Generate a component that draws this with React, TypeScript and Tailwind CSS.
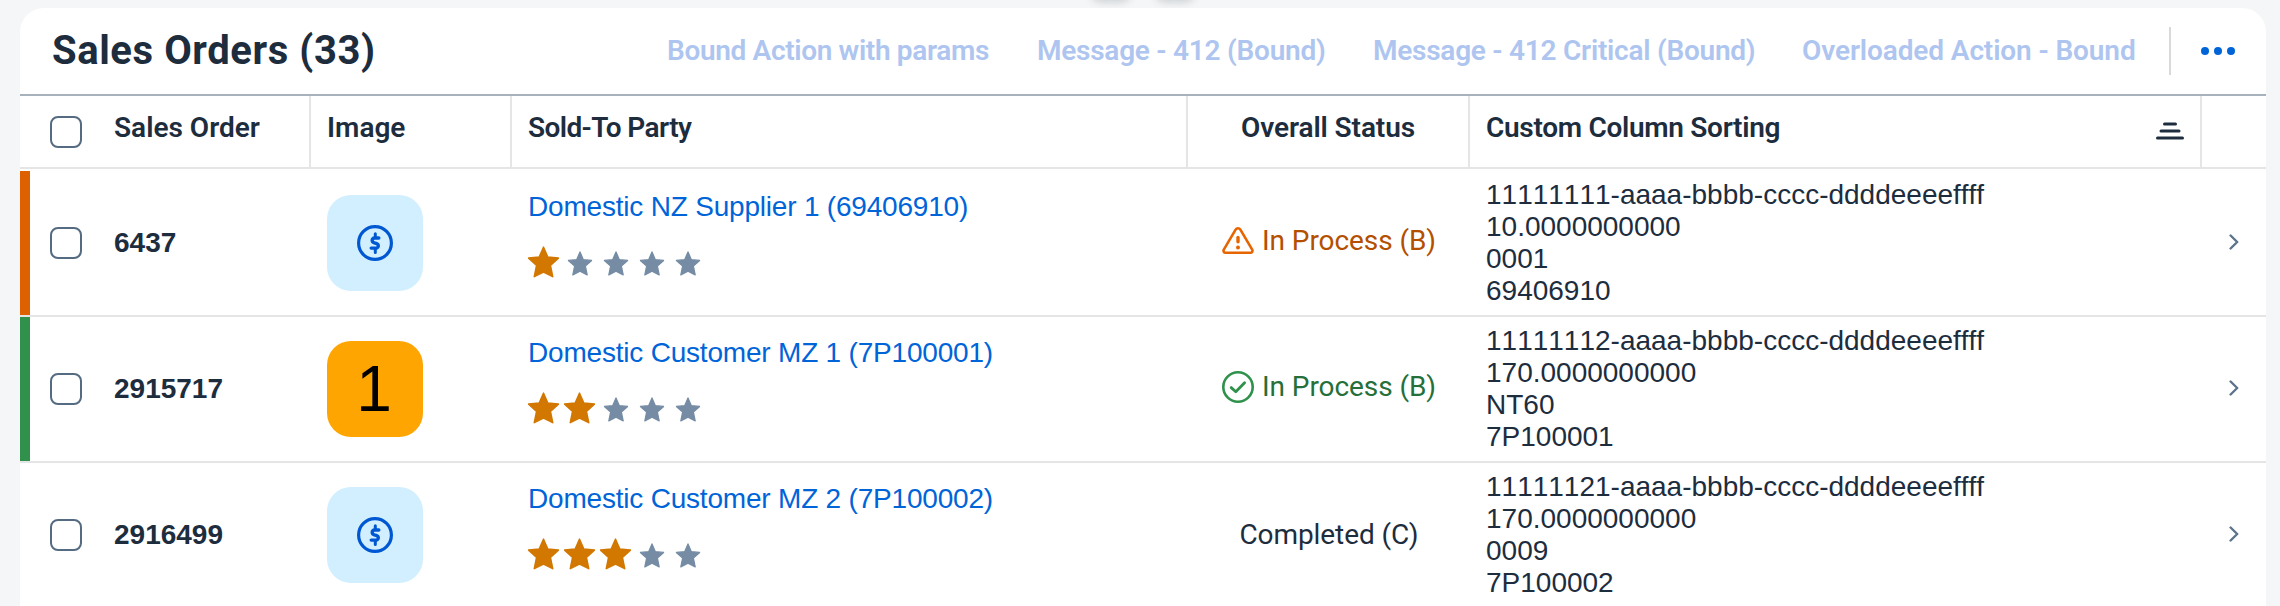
import type { ReactNode } from "react";

const COLS = "grid grid-cols-[10px_68px_213px_201px_676px_282px_732px_64px]";

type Status = "warning" | "success" | "none";

interface Order {
  id: string;
  status: Status;
  statusText: string;
  image?: string;
  party: string;
  rating: number;
  custom: string[];
}

const orders: Order[] = [
  {
    id: "6437",
    status: "warning",
    statusText: "In Process (B)",
    party: "Domestic NZ Supplier 1 (69406910)",
    rating: 1,
    custom: ["11111111-aaaa-bbbb-cccc-ddddeeeeffff", "10.0000000000", "0001", "69406910"],
  },
  {
    id: "2915717",
    status: "success",
    statusText: "In Process (B)",
    image: "1",
    party: "Domestic Customer MZ 1 (7P100001)",
    rating: 2,
    custom: ["11111112-aaaa-bbbb-cccc-ddddeeeeffff", "170.0000000000", "NT60", "7P100001"],
  },
  {
    id: "2916499",
    status: "none",
    statusText: "Completed (C)",
    party: "Domestic Customer MZ 2 (7P100002)",
    rating: 3,
    custom: ["11111121-aaaa-bbbb-cccc-ddddeeeeffff", "170.0000000000", "0009", "7P100002"],
  },
];

const highlight: Record<Status, string> = {
  warning: "bg-[#dd6100]",
  success: "bg-[#30914c]",
  none: "",
};

const statusColor: Record<Status, string> = {
  warning: "pb-1 text-[#b44f00]",
  success: "pb-1 text-[#256f3a]",
  none: "text-[#1d2d3e]",
};

function Checkbox() {
  return <span className="block size-8 rounded-lg border-2 border-[#556b82] bg-white" />;
}

function DollarIcon() {
  return (
    <svg viewBox="0 0 36 36" className="size-9" fill="none" stroke="#0057d2" strokeLinecap="round" strokeLinejoin="round">
      <circle cx="18" cy="18" r="16.4" strokeWidth="3.2" />
      <path d="M21.800 13h-4.300a2.300 2.300 0 0 0-2.300 2.400c0 1.500 1 2 2.200 2.400l1.700.5c1.200.4 2.200 1 2.200 2.400a2.300 2.300 0 0 1-2.300 2.400h-4.800" strokeWidth="3.4" />
      <path d="M18.300 8.800v3.400M18.300 24v3.500" strokeWidth="3" />
    </svg>
  );
}

function WarningIcon() {
  return (
    <svg viewBox="0 0 32 32" className="size-8" fill="none" stroke="#e76500" strokeLinecap="round" strokeLinejoin="round">
      <path d="M13.6 4.6a2.8 2.8 0 0 1 4.8 0l11.8 20.1a2.05 2.05 0 0 1-1.8 3.1H3.6a2.05 2.05 0 0 1-1.8-3.1z" strokeWidth="2.6" />
      <path d="M16 12.4v4.4" strokeWidth="3.4" />
      <circle cx="16" cy="22.4" r="2" fill="#e76500" stroke="none" />
    </svg>
  );
}

function SuccessIcon() {
  return (
    <svg viewBox="0 0 32 32" className="size-8" fill="none" stroke="#30914c" strokeLinecap="round" strokeLinejoin="round">
      <circle cx="16" cy="16" r="14.7" strokeWidth="2.6" />
      <path d="M9.2 16.6l4.6 4.2 8.8-9" strokeWidth="2.8" />
    </svg>
  );
}

const STAR = "M16 1.2l4.3 9.9 10.6 1-8 7.2 2.3 11.3L16 26l-9.200 4.600 2.300-11.300-8-7.200 10.600-1z";

function Rating({ value }: { value: number }) {
  return (
    <div className="flex h-8 w-[180px] -translate-x-[2.5px]">
      {[1, 2, 3, 4, 5].map((n) => (
        <span key={n} className="flex w-9 shrink-0 items-center justify-center">
          {n <= value ? (
            <svg viewBox="0 0 32 32" className="size-8" fill="#d27700" stroke="#d27700" strokeWidth="1.6" strokeLinejoin="round">
              <path d={STAR} />
            </svg>
          ) : (
            <svg viewBox="0 0 32 32" className="mt-[3px] size-[25px]" fill="#758ca4" stroke="#758ca4" strokeWidth="1.6" strokeLinejoin="round">
              <path d={STAR} />
            </svg>
          )}
        </span>
      ))}
    </div>
  );
}

function Avatar({ text }: { text?: string }) {
  return text ? (
    <div className="flex size-24 items-center justify-center rounded-3xl bg-[#ffa502] pr-0.5 font-['Liberation_Sans',sans-serif] text-[64px] leading-none text-black">
      {text}
    </div>
  ) : (
    <div className="flex size-24 items-center justify-center rounded-3xl bg-[#d1efff]">
      <DollarIcon />
    </div>
  );
}

function HeaderCell({ children, className = "" }: { children?: ReactNode; className?: string }) {
  return (
    <div className={`flex border-r-2 border-[#e5e5e5] px-4 pt-4 text-[28px] leading-8 font-semibold ${className}`}>
      {children}
    </div>
  );
}

export default function App() {
  return (
    <div className="relative h-[606px] w-[2280px] overflow-hidden bg-[#f5f6f7] pt-2 pl-5 font-[Roboto,sans-serif] text-[#1d2d3e]">
      <span className="absolute -top-9 left-[1093px] h-9 w-9 rounded-lg shadow-[0_0_8px_2px_rgba(34,53,72,0.2)]" />
      <span className="absolute -top-9 left-[1157px] h-9 w-9 rounded-lg shadow-[0_0_8px_2px_rgba(34,53,72,0.2)]" />
      <section className="relative h-[598px] w-[2246px] rounded-t-3xl bg-white">
        <header className="flex h-[86px] items-center pr-[31px] pl-8">
          <h2 className="text-[40px] leading-[48px] font-bold tracking-[0.58px]">Sales Orders (33)</h2>
          <div className="ml-auto flex items-center text-[28px] leading-8 font-semibold whitespace-nowrap text-[#aec5f0]">
            <span className="w-[370px] tracking-[-0.34px]">Bound Action with params</span>
            <span className="w-[336px] tracking-[-0.25px]">Message - 412 (Bound)</span>
            <span className="w-[429px] tracking-[-0.25px]">Message - 412 Critical (Bound)</span>
            <span className="w-[367px] tracking-[-0.11px]">Overloaded Action - Bound</span>
          </div>
          <span className="h-12 w-0.5 bg-[#d9d9d9]" />
          <svg viewBox="0 0 34 8" className="ml-[30px] h-2 w-[34px]" fill="#0064d9">
            <circle cx="4" cy="4" r="4" />
            <circle cx="17" cy="4" r="4" />
            <circle cx="30" cy="4" r="4" />
          </svg>
        </header>

        <div className={`${COLS} h-[75px] border-y-2 border-t-[#a8b2bd] border-b-[#e5e5e5]`}>
          <span />
          <div className="pt-5 pl-5">
            <Checkbox />
          </div>
          <HeaderCell>Sales Order</HeaderCell>
          <HeaderCell>Image</HeaderCell>
          <HeaderCell className="tracking-[-0.6px]">Sold-To Party</HeaderCell>
          <HeaderCell className="justify-center tracking-[-0.1px]">Overall Status</HeaderCell>
          <HeaderCell className="justify-between tracking-[-0.3px]">
            Custom Column Sorting
            <svg viewBox="0 0 28 18" className="mt-2.5 h-[18px] w-7" stroke="#1d2d3e" strokeWidth="3" strokeLinecap="round">
              <path d="M8.500 2h11M5 9h18M1.500 16h25" />
            </svg>
          </HeaderCell>
        </div>

        {orders.map((o, i) => (
          <div
            key={o.id}
            className={`${COLS} border-b-2 border-[#e5e5e5] ${i === 0 ? "h-[148px] pt-0.5" : "h-[146px]"}`}
          >
            <span className={highlight[o.status]} />
            <div className="flex items-center pl-5">
              <Checkbox />
            </div>
            <div className="flex items-center pl-4 font-['Liberation_Sans',sans-serif] text-[28px] leading-8 font-bold">
              {o.id}
            </div>
            <div className="flex items-center pl-4">
              <Avatar text={o.image} />
            </div>
            <div className="pt-5 pl-4">
              <a className="block font-['Liberation_Sans',sans-serif] text-[28px] leading-8 tracking-[-0.2px] text-[#0064d9]">{o.party}</a>
              <div className="mt-[23px]">
                <Rating value={o.rating} />
              </div>
            </div>
            <div className={`flex items-center justify-center gap-2 ${statusColor[o.status]}`}>
              {o.status === "warning" && <WarningIcon />}
              {o.status === "success" && <SuccessIcon />}
              <span className="text-[28px] leading-8 tracking-[-0.08px]">{o.statusText}</span>
            </div>
            <div className="pt-2 pl-4 font-['Liberation_Sans',sans-serif] text-[28px] leading-8 [font-kerning:none]">
              {o.custom.map((c) => (
                <div key={c}>{c}</div>
              ))}
            </div>
            <div className="flex items-center pl-[27px]">
              <svg viewBox="0 0 10 16" className="mb-0.5 h-4 w-2.5" fill="none" stroke="#5b738b" strokeWidth="2.4" strokeLinecap="round" strokeLinejoin="round">
                <path d="M1.600 1.500L8.200 8l-6.600 6.500" />
              </svg>
            </div>
          </div>
        ))}
      </section>
    </div>
  );
}
